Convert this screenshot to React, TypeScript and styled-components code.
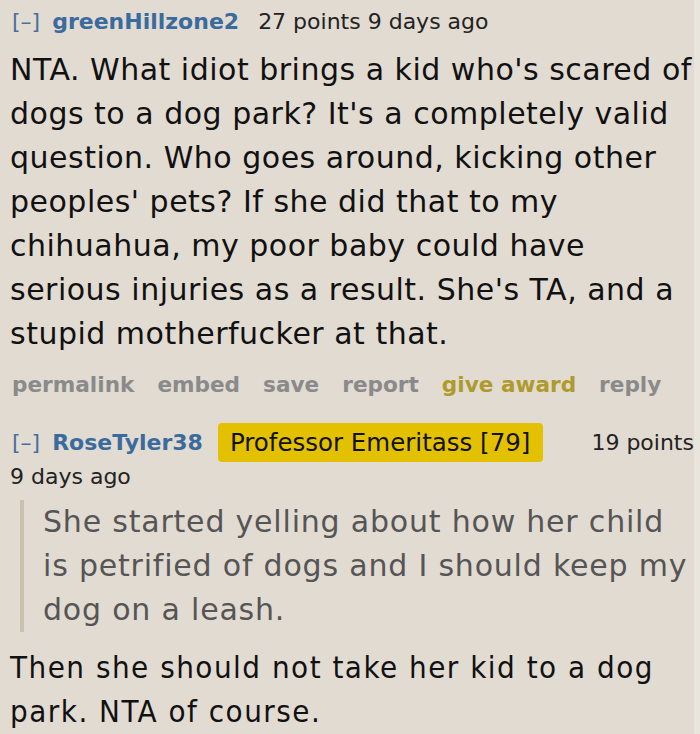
import React from "react";
import styled, { createGlobalStyle } from "styled-components";

const GlobalStyle = createGlobalStyle`
  html, body {
    margin: 0;
    padding: 0;
    background: #e9e4dc;
  }
  body {
    font-family: "DejaVu Sans", Verdana, sans-serif;
    color: #111;
  }
`;

const App = () => {
  return (
    <>
      <GlobalStyle />
      <Page>
        <Tagline>
          <Toggle>[–]</Toggle>
          <Author>greenHillzone2</Author>
          <Meta>27 points 9 days ago</Meta>
        </Tagline>
        <Body>
          NTA. What idiot brings a kid who's scared of dogs to a dog park? It's
          a completely valid question. Who goes around, kicking other peoples'
          pets? If she did that to my chihuahua, my poor baby could have serious
          injuries as a result. She's TA, and a stupid motherfucker at that.
        </Body>
        <Buttons>
          <Action>permalink</Action>
          <Action>embed</Action>
          <Action>save</Action>
          <Action>report</Action>
          <Action gold>give award</Action>
          <Action>reply</Action>
        </Buttons>

        <Tagline second>
          <Toggle>[–]</Toggle>
          <Author>RoseTyler38</Author>
          <Flair>Professor Emeritass [79]</Flair>
          <Meta>19 points</Meta>
          <Meta>9 days ago</Meta>
        </Tagline>
        <Quote>
          She started yelling about how her child is petrified of dogs and I
          should keep my dog on a leash.
        </Quote>
        <Reply>Then she should not take her kid to a dog park. NTA of course.</Reply>
      </Page>
    </>
  );
};

export default App;

const Page = styled.div`
  width: 694px;
  height: 734px;
  box-sizing: border-box;
  background: #e2dbd2;
  padding: 0 0 0 10px;
  overflow: hidden;
`;

const Tagline = styled.div<{ second?: boolean }>`
  display: flex;
  flex-wrap: wrap;
  align-items: center;
  font-size: 22px;
  line-height: 30px;
  padding-top: ${(p) => (p.second ? "19px" : "7px")};
`;

const Toggle = styled.span`
  color: #4b6f9a;
  margin-left: 2px;
  margin-right: 12px;
`;

const Author = styled.span`
  color: #3b6b9d;
  font-weight: bold;
  margin-right: 19px;
`;

const Meta = styled.span`
  color: #222;
`;

const Flair = styled.span`
  background: #e4c100;
  color: #111;
  font-size: 24.5px;
  line-height: 29px;
  padding: 5px 13px 5px 12px;
  border-radius: 4px;
  margin: 0 48px 0 -4px;
`;

const Body = styled.p`
  margin: 11px -8px 0 0;
  font-size: 30px;
  letter-spacing: 0.5px;
  line-height: 44px;
  color: #111;
`;

const Buttons = styled.div`
  display: flex;
  gap: 23px;
  padding: 8px 0 0 2px;
  height: 40px;
  align-items: center;
`;

const Action = styled.span<{ gold?: boolean }>`
  font-size: 21.6px;
  font-weight: bold;
  color: ${(p) => (p.gold ? "#ae9a2d" : "#8a8a8a")};
`;

const Quote = styled.blockquote`
  margin: 8px 0 0 10px;
  padding: 0 0 0 19px;
  border-left: 4px solid #c9c2b1;
  font-size: 30px;
  letter-spacing: 0.8px;
  line-height: 44px;
  color: #555;
`;

const Reply = styled.p`
  margin: 13px 0 0;
  font-family: "DejaVu Sans Condensed", "DejaVu Sans", sans-serif;
  font-size: 31px;
  letter-spacing: 1.5px;
  line-height: 44px;
  color: #111;
`;
